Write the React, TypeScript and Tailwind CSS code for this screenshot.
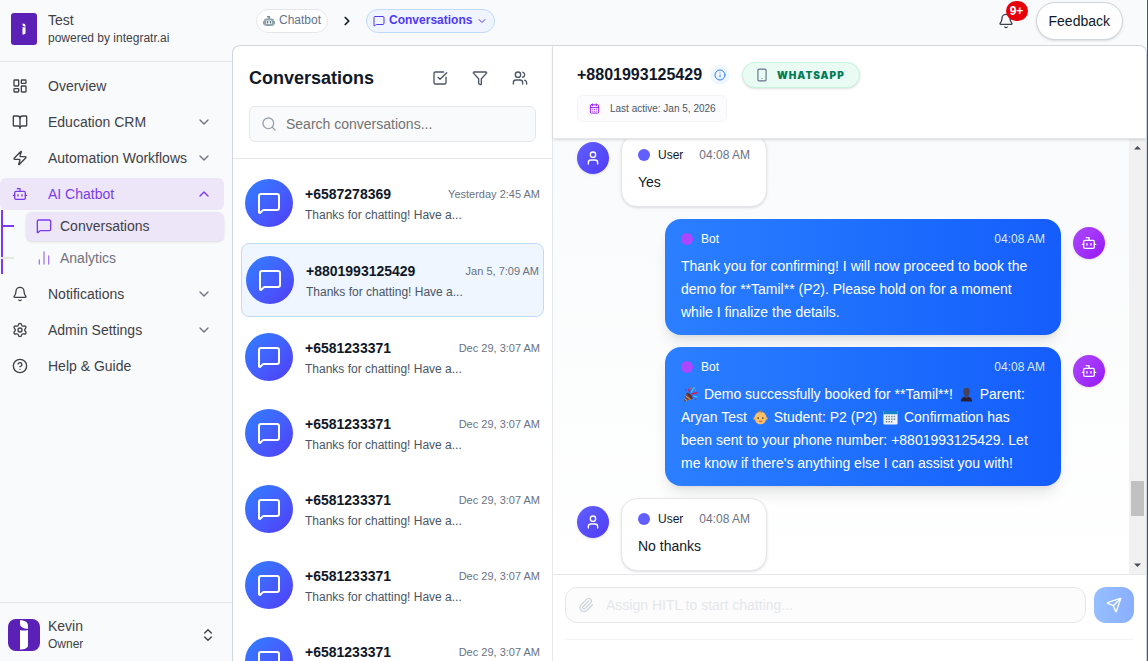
import React from "react";
import {
  BookOpen,
  Bot,
  CalendarDays,
  ChartNoAxesColumn,
  ChevronDown,
  ChevronRight,
  ChevronUp,
  ChevronsUpDown,
  CircleQuestionMark,
  Bell,
  Funnel,
  Info,
  LayoutDashboard,
  MessageSquare,
  Paperclip,
  Search,
  Send,
  Settings,
  Smartphone,
  SquareCheckBig,
  User,
  Users,
  Zap,
  type LucideIcon,
} from "lucide-react";

const PREVIEW = "Thanks for chatting! Have a...";

const conversations = [
  { phone: "+6587278369", time: "Yesterday 2:45 AM", active: false },
  { phone: "+8801993125429", time: "Jan 5, 7:09 AM", active: true },
  { phone: "+6581233371", time: "Dec 29, 3:07 AM", active: false },
  { phone: "+6581233371", time: "Dec 29, 3:07 AM", active: false },
  { phone: "+6581233371", time: "Dec 29, 3:07 AM", active: false },
  { phone: "+6581233371", time: "Dec 29, 3:07 AM", active: false },
  { phone: "+6581233371", time: "Dec 29, 3:07 AM", active: false },
];

function BrandMark({ className }: { className: string }) {
  return (
    <svg viewBox="0 0 32 32" className={className} aria-hidden="true">
      <path d="M12 1.2c4.500-.2 8 2 8 5.300v3.200c-4.500 0-8-1.500-8-5z" fill="#fff" />
      <path d="M12 11c2 .7 5 .8 8 0v15.500c0 2.500-3.500 4-8 4z" fill="#fff" />
    </svg>
  );
}

function NavItem({
  icon: Icon,
  label,
  chevron,
  active,
}: {
  icon: LucideIcon;
  label: string;
  chevron?: "up" | "down";
  active?: boolean;
}) {
  return (
    <button
      type="button"
      className={
        active
          ? "flex h-8 w-full items-center rounded-md bg-[#ede6f9] pr-3 pl-3 text-left text-sm text-[#7c3aed]"
          : "flex h-8 w-full items-center rounded-md pr-3 pl-3 text-left text-sm text-zinc-700"
      }
    >
      <Icon size={16} className="mr-5 shrink-0" />
      <span className="flex-1 whitespace-nowrap">{label}</span>
      {chevron === "down" && <ChevronDown size={16} className="shrink-0 text-zinc-500" />}
      {chevron === "up" && <ChevronUp size={16} className="shrink-0" />}
    </button>
  );
}

function Sidebar() {
  return (
    <aside className="flex w-[232px] shrink-0 flex-col">
      <div className="flex h-[62px] items-center gap-[11px] border-b border-gray-200 pb-1 pl-[11px]">
        <div className="flex h-8 w-[26px] items-center justify-center rounded-[3px] bg-[#5b21b6]">
          <BrandMark className="h-3 w-4" />
        </div>
        <div>
          <div className="text-sm leading-[18px] text-zinc-700">Test</div>
          <div className="text-xs leading-[18px] text-zinc-700">powered by integratr.ai</div>
        </div>
      </div>

      <nav className="flex flex-1 flex-col gap-1 pt-2 pr-2">
        <NavItem icon={LayoutDashboard} label="Overview" />
        <NavItem icon={BookOpen} label="Education CRM" chevron="down" />
        <NavItem icon={Zap} label="Automation Workflows" chevron="down" />
        <div>
          <NavItem icon={Bot} label="AI Chatbot" chevron="up" active />
          <div className="ml-px border-l-2 border-[#7c3aed]">
            <div className="flex h-8 items-center">
              <span className="mr-3 h-0.5 w-[11px] bg-[#7c3aed]" />
              <a
                href="#conversations"
                className="flex h-[29px] flex-1 items-center gap-2 rounded-md bg-[#ede6f9] pl-2.5 text-sm text-zinc-700 shadow-sm"
              >
                <MessageSquare size={16} className="text-[#7c3aed]" />
                Conversations
              </a>
            </div>
            <div className="flex h-8 items-center">
              <span className="mr-3 -ml-0.5 h-0.5 w-[13px] bg-gray-200" />
              <a
                href="#analytics"
                className="flex h-[29px] flex-1 items-center gap-2 pl-2.5 text-sm text-zinc-500"
              >
                <ChartNoAxesColumn size={16} className="text-[#a47bf0]" />
                Analytics
              </a>
            </div>
          </div>
        </div>
        <NavItem icon={Bell} label="Notifications" chevron="down" />
        <NavItem icon={Settings} label="Admin Settings" chevron="down" />
        <NavItem icon={CircleQuestionMark} label="Help &amp; Guide" />
      </nav>

      <button
        type="button"
        className="flex items-center gap-2 border-t border-gray-200 pt-3.5 pr-4 pb-2 pl-2 text-left text-zinc-700"
      >
        <span className="flex size-8 items-center justify-center rounded-lg bg-[#5b21b6]">
          <BrandMark className="size-8" />
        </span>
        <span className="flex-1">
          <span className="block text-sm leading-[18px]">Kevin</span>
          <span className="block text-xs leading-[18px]">Owner</span>
        </span>
        <ChevronsUpDown size={16} />
      </button>
    </aside>
  );
}

function BotGlyph() {
  return (
    <svg viewBox="0 0 24 24" className="size-3" aria-hidden="true">
      <path d="M8 2h6v6h-3V5H8z" fill="#78909c" />
      <path d="M0 12h3v7H0zM21 12h3v7h-3z" fill="#90a4ae" />
      <rect x="2" y="7" width="20" height="15" rx="4" fill="#90a4ae" />
      <rect x="6" y="11" width="12" height="7" rx="1" fill="#fff" />
      <path d="M7.500 12h3v5h-3zM13.500 12h3v5h-3z" fill="#607d8b" />
    </svg>
  );
}

function TopBar() {
  return (
    <header className="flex h-[45px] shrink-0 items-start justify-between pr-6 pl-6">
      <nav aria-label="Breadcrumb" className="flex items-center pt-[9px]">
        <a
          href="#chatbot"
          className="flex h-6 items-center gap-1 rounded-full border border-gray-200 bg-white px-1.5 text-xs text-slate-500"
        >
          <BotGlyph />
          <span className="pb-0.5">Chatbot</span>
        </a>
        <ChevronRight size={14} strokeWidth={3} className="mx-3 text-gray-900" />
        <button
          type="button"
          className="flex h-6 items-center gap-1 rounded-full border border-blue-200 bg-[#eff4ff] px-1.5 text-xs font-bold text-indigo-600"
        >
          <MessageSquare size={12} />
          <span className="pb-0.5">Conversations</span>
          <ChevronDown size={12} />
        </button>
      </nav>
      <div className="flex items-center gap-5 pt-0.5">
        <button
          type="button"
          aria-label="Notifications"
          className="relative flex size-5 items-center justify-center text-gray-700"
        >
          <Bell size={16} />
          <span className="absolute -top-[10px] left-[10px] flex h-5 w-[22px] items-center justify-center rounded-full bg-red-600 text-xs font-bold text-white">
            9+
          </span>
        </button>
        <button
          type="button"
          className="h-[38px] rounded-full border border-gray-300 bg-white px-3 text-sm text-gray-900 shadow-sm"
        >
          Feedback
        </button>
      </div>
    </header>
  );
}

function ConversationList() {
  return (
    <section className="flex w-[320px] shrink-0 flex-col overflow-hidden border-r border-gray-200">
      <div className="border-b border-gray-200 px-4 pt-4 pb-4">
        <div className="flex h-8 items-center justify-between">
          <h1 className="text-lg font-bold text-gray-900">Conversations</h1>
          <div className="flex gap-2 text-gray-600">
            <button type="button" aria-label="Select" className="flex size-8 items-center justify-center">
              <SquareCheckBig size={16} />
            </button>
            <button type="button" aria-label="Filter" className="flex size-8 items-center justify-center">
              <Funnel size={16} />
            </button>
            <button type="button" aria-label="Assignees" className="flex size-8 items-center justify-center">
              <Users size={16} />
            </button>
          </div>
        </div>
        <label className="mt-3 flex h-9 items-center gap-[9px] rounded-md border border-gray-200 bg-gray-50 px-[11px]">
          <Search size={16} className="shrink-0 text-gray-400" />
          <input
            type="search"
            aria-label="Search conversations"
            placeholder="Search conversations..."
            className="min-w-0 flex-1 bg-transparent text-sm text-gray-900 outline-none placeholder:text-neutral-500"
          />
        </label>
      </div>
      <ul className="flex min-h-0 flex-1 flex-col gap-1 overflow-hidden p-2">
        {conversations.map((c, i) => (
          <li key={i} className="shrink-0">
            <button
              type="button"
              className={
                c.active
                  ? "flex w-full items-center gap-3 rounded-lg border border-blue-200 bg-[#eff6ff] px-1 py-3 text-left"
                  : "flex w-full items-center gap-3 rounded-lg px-1 py-3 text-left"
              }
            >
              <span className="flex size-12 shrink-0 items-center justify-center rounded-full bg-linear-to-br from-blue-500 to-indigo-600 text-white">
                <MessageSquare size={24} />
              </span>
              <span className="min-w-0 flex-1 pt-0.5">
                <span className="flex items-center justify-between leading-5">
                  <span className="text-sm font-bold text-gray-900">{c.phone}</span>
                  <span className="text-[11px] text-gray-500">{c.time}</span>
                </span>
                <span className="mt-0.5 block text-xs leading-[18px] text-gray-600">{PREVIEW}</span>
              </span>
            </button>
          </li>
        ))}
      </ul>
    </section>
  );
}

function UserMessage({ time, children }: { time: string; children: React.ReactNode }) {
  return (
    <div className="flex shrink-0 items-start gap-3">
      <span className="mt-2 flex size-8 shrink-0 items-center justify-center rounded-full bg-linear-to-br from-[#615fff] to-indigo-600 text-white shadow-sm">
        <User size={16} />
      </span>
      <div className="rounded-2xl border border-gray-200 bg-white px-4 py-3 shadow-sm">
        <div className="mb-2 flex items-center text-xs leading-4">
          <span className="mr-2 size-3 rounded-full bg-[#615fff]" />
          <span className="mr-4 text-gray-900">User</span>
          <span className="ml-auto text-gray-500">{time}</span>
        </div>
        <p className="text-sm leading-relaxed text-gray-900">{children}</p>
      </div>
    </div>
  );
}

function BotMessage({ time, children }: { time: string; children: React.ReactNode }) {
  return (
    <div className="flex shrink-0 items-start justify-end gap-3">
      <div className="w-3/4 rounded-2xl bg-linear-to-r from-[#2b7fff] to-[#155dfc] px-4 py-3 text-white shadow-lg">
        <div className="mb-2 flex items-center text-xs leading-4">
          <span className="mr-2 size-3 rounded-full bg-[#ad46ff]" />
          <span>Bot</span>
          <span className="ml-auto text-blue-100">{time}</span>
        </div>
        <p className="pr-2 text-sm leading-relaxed">{children}</p>
      </div>
      <span className="mt-2 flex size-8 shrink-0 items-center justify-center rounded-full bg-linear-to-br from-[#ad46ff] to-[#9810fa] text-white shadow-sm">
        <Bot size={16} />
      </span>
    </div>
  );
}

const emojiClass = "mx-0.5 inline-block size-[15px] align-[-3px]";

function PartyPopper() {
  return (
    <svg viewBox="0 0 16 16" className={emojiClass} role="img" aria-label="Party popper">
      <path d="M1 15.500 4 6l6.500 6.500z" fill="#7d4533" />
      <path d="m2 12.500 2.500 2.200M3 9.500l5 4" stroke="#f0b37e" strokeWidth="1" />
      <path d="M4 6c3 0 6 3 6.500 6.500-2-.3-6-3.500-6.500-6.500z" fill="#5a2f35" />
      <path d="M9 7.500 15.500 6M7 5.500 6 2" stroke="#e3173e" strokeWidth="1.500" fill="none" />
      <path d="M9 6c0-2 1.500-2 1.500-3.500S12 1 13 1M11 10c2-1 2 1 4.500.5" stroke="#4fc3f7" strokeWidth="1.300" fill="none" />
      <circle cx="3" cy="3" r=".9" fill="#5a3fd6" />
      <circle cx="13" cy="3.500" r=".9" fill="#ba68c8" />
      <circle cx="13.500" cy="13" r=".8" fill="#e3173e" />
      <circle cx="8" cy="1.300" r=".8" fill="#ef5350" />
    </svg>
  );
}

function Bust() {
  return (
    <svg viewBox="0 0 16 16" className={emojiClass} role="img" aria-label="Person">
      <path d="M2 15.500c0-3.500 2-4.500 4-5h4c2 .5 4 1.500 4 5z" fill="#2a2035" />
      <path d="M4.500 4.500C4.500 2 6 .8 8 .8s3.500 1.200 3.500 3.700c0 2-.6 3.700-1.700 4.700v1.600L8 12l-1.800-1.200V9.200C5.100 8.200 4.500 6.500 4.500 4.500z" fill="#4a4358" />
    </svg>
  );
}

function Baby() {
  return (
    <svg viewBox="0 0 16 16" className={emojiClass} role="img" aria-label="Baby">
      <ellipse cx="8" cy="8.500" rx="6.300" ry="6.700" fill="#fbc16a" />
      <circle cx="1.600" cy="9" r="1.300" fill="#f2a94f" />
      <circle cx="14.400" cy="9" r="1.300" fill="#f2a94f" />
      <path d="M7 2c0-1.500 2-1.800 2.500-.8M5 2.500C6 1.500 8 1.500 9.500 3" stroke="#c98236" strokeWidth="1" fill="none" />
      <circle cx="5.500" cy="8.500" r=".9" fill="#4e342e" />
      <circle cx="10.500" cy="8.500" r=".9" fill="#4e342e" />
      <path d="M6.300 11.500h3.400c-.3 1.500-3 1.500-3.400 0z" fill="#d32f2f" />
    </svg>
  );
}

function CalendarEmoji() {
  return (
    <svg viewBox="0 0 16 16" className={emojiClass} role="img" aria-label="Calendar">
      <rect x=".5" y="1" width="15" height="14.500" rx="1.500" fill="#eef4f8" />
      <path d="M.5 4.500v-2A1.500 1.500 0 0 1 2 1h12a1.500 1.500 0 0 1 1.500 1.500v2z" fill="#1583c8" />
      <path d="M3 7h10M3 9.800h10M3 12.600h7" stroke="#6f8793" strokeWidth="1.600" strokeDasharray="1.600 1.200" />
    </svg>
  );
}

function ChatHeader() {
  return (
    <div className="z-10 shrink-0 border-b border-gray-200 bg-white px-6 pt-4 pb-4 shadow-sm">
      <div className="flex h-[26px] items-center">
        <h2 className="text-base font-bold text-gray-900">+8801993125429</h2>
        <button
          type="button"
          aria-label="Contact details"
          className="ml-2 flex size-5 items-center justify-center rounded-full bg-blue-50 text-blue-500"
        >
          <Info size={12} />
        </button>
        <span className="ml-3 flex h-[26px] items-center gap-2 rounded-full border border-[#c5f5dd] bg-[#e9fbf3] pr-3.5 pl-3 text-emerald-700 shadow-sm">
          <Smartphone size={14} className="text-slate-500" />
          <span className="font-[Inter,sans-serif] text-[10px] font-black tracking-widest">WHATSAPP</span>
        </span>
      </div>
      <div className="mt-[7px] flex">
        <div className="flex h-[27px] items-center gap-2.5 rounded-md border border-gray-100 bg-[#fcfcfe] px-2.5">
          <span className="flex size-3 items-center justify-center rounded-sm bg-purple-50 text-purple-600">
            <CalendarDays size={11} />
          </span>
          <span className="text-[10px] text-gray-600">Last active: Jan 5, 2026</span>
        </div>
      </div>
    </div>
  );
}

function ScrollTrack() {
  return (
    <div aria-hidden="true" className="flex w-[17px] shrink-0 flex-col items-center bg-[#f1f1f1]">
      <svg viewBox="0 0 17 17" className="size-[17px] shrink-0">
        <path d="M5 10.500h7L8.500 7z" fill="#4a4a5a" />
      </svg>
      <div className="grow-8" />
      <div className="h-[35px] w-[13px] shrink-0 bg-[#c1c1c1]" />
      <div className="grow" />
      <svg viewBox="0 0 17 17" className="size-[17px] shrink-0">
        <path d="M5 6.500h7L8.500 10z" fill="#4a4a5a" />
      </svg>
    </div>
  );
}

function Chat() {
  return (
    <section className="flex min-w-0 flex-1 flex-col">
      <ChatHeader />
      <div className="flex min-h-0 flex-1 bg-linear-to-b from-gray-50 to-white">
        <div className="flex min-w-0 flex-1 flex-col justify-end gap-3 overflow-hidden px-6 pb-[3px]">
          <UserMessage time="04:08 AM">Yes</UserMessage>
          <BotMessage time="04:08 AM">
            Thank you for confirming! I will now proceed to book the demo for **Tamil** (P2). Please hold on for a
            moment while I finalize the details.
          </BotMessage>
          <BotMessage time="04:08 AM">
            <PartyPopper /> Demo successfully booked for **Tamil**! <Bust /> Parent: Aryan Test <Baby /> Student: P2
            (P2) <CalendarEmoji /> Confirmation has been sent to your phone number: +8801993125429. Let me know if
            there's anything else I can assist you with!
          </BotMessage>
          <UserMessage time="04:08 AM">No thanks</UserMessage>
        </div>
        <ScrollTrack />
      </div>
      <div className="shrink-0 border-t border-gray-200 bg-white px-3 pt-3 pb-[21px]">
        <form className="flex gap-2 border-b border-gray-100 pb-4">
          <label className="flex h-9 flex-1 items-center gap-3 rounded-xl border border-gray-200 bg-[#fcfcfc] px-3">
            <Paperclip size={16} className="shrink-0 text-gray-300" />
            <input
              type="text"
              disabled
              aria-label="Message"
              placeholder="Assign HITL to start chatting..."
              className="min-w-0 flex-1 bg-transparent text-sm outline-none placeholder:text-gray-200"
            />
          </label>
          <button
            type="button"
            disabled
            aria-label="Send"
            className="flex h-9 w-10 items-center justify-center rounded-xl bg-linear-to-r from-[#95bfff] to-[#8aaefe] text-white"
          >
            <Send size={16} />
          </button>
        </form>
      </div>
    </section>
  );
}

export default function App() {
  return (
    <div className="flex h-screen overflow-hidden border-r border-gray-600 bg-gray-50 font-['Liberation_Sans',Arial,sans-serif]">
      <Sidebar />
      <main className="flex min-w-0 flex-1 flex-col">
        <TopBar />
        <div className="flex min-h-0 flex-1 overflow-hidden rounded-t-lg border-x border-t border-gray-300 bg-white">
          <ConversationList />
          <Chat />
        </div>
      </main>
    </div>
  );
}
